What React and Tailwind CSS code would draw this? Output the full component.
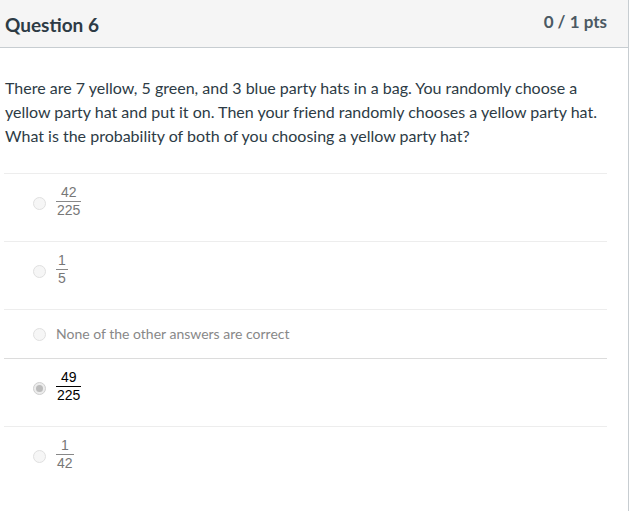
import React from "react";

const answers = [
  { kind: "frac", num: "42", den: "225" },
  { kind: "frac", num: "1", den: "5" },
  { kind: "text", label: "None of the other answers are correct" },
  { kind: "frac", num: "49", den: "225", selected: true },
  { kind: "frac", num: "1", den: "42" },
];

function Radio({ selected }) {
  return (
    <span
      className={`flex items-center justify-center w-[13px] h-[13px] shrink-0 rounded-full border ${
        selected ? "border-[#cfcfcf] bg-[#ececec]" : "border-[#e0e0e0] bg-[#f6f6f6]"
      }`}
    >
      {selected && <span className="w-[7px] h-[7px] rounded-full bg-[#bcbcbc]" />}
    </span>
  );
}

function Fraction({ num, den, selected }) {
  // MathJax-style stacked fraction
  return (
    <span
      className={`inline-flex flex-col items-center text-[14px] leading-[13px] font-['Liberation_Sans',sans-serif] ${
        selected ? "text-black" : "text-[#777]"
      }`}
    >
      <span className="px-[2px]">{num}</span>
      <span className={`self-stretch h-px my-[2px] ${selected ? "bg-black" : "bg-[#888]"}`} />
      <span className="px-[1px]">{den}</span>
    </span>
  );
}

export default function App() {
  return (
    <div className="w-[629px] h-[511px] bg-white border-r border-[#c7cdd1] font-['Lato',sans-serif] text-[#2d3b45] overflow-hidden">
      {/* Header */}
      <div className="h-[48px] flex items-center justify-between pl-[5px] pr-[21px] bg-[#f5f5f5] border-b border-[#c7cdd1]">
        <h2 className="text-[19px] font-bold leading-none mt-[1px]">Question 6</h2>
        <div className="text-[17px] font-bold text-[#4b5963] leading-none -mt-[4px]">0 / 1 pts</div>
      </div>

      {/* Question text */}
      <div className="pt-[28px] pl-[5px] pr-[21px] text-[16px] leading-[24px]">
        There are 7 yellow, 5 green, and 3 blue party hats in a bag. You randomly choose a yellow party
        hat and put it on. Then your friend randomly chooses a yellow party hat. What is the probability of
        both of you choosing a yellow party hat?
      </div>

      {/* Answers */}
      <div className="mt-[25px] ml-[4px] mr-[21px]">
        {answers.map((a, i) =>
          a.kind === "frac" ? (
            <div
              key={i}
              className={`h-[68px] flex items-start pl-[29px] border-t ${
                a.selected ? "border-[#dcdcdc]" : "border-[#ededed]"
              }`}
            >
              <span className="mt-[23px]">
                <Radio selected={a.selected} />
              </span>
              <span className="ml-[10px] mt-[5px]">
                <Fraction num={a.num} den={a.den} selected={a.selected} />
              </span>
            </div>
          ) : (
            <div key={i} className="h-[49px] flex items-center pl-[29px] border-t border-[#ededed]">
              <Radio />
              <span className="ml-[10px] text-[14px] text-[#888] leading-none">{a.label}</span>
            </div>
          )
        )}
      </div>
    </div>
  );
}
